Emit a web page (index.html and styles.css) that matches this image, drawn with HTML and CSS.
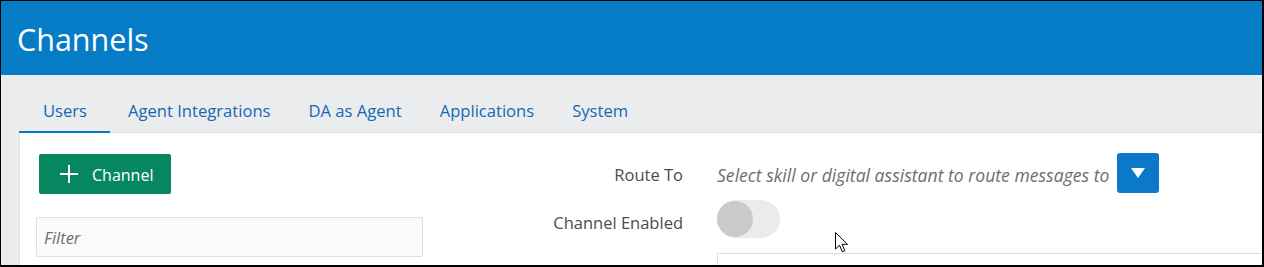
FILE: index.html
```html
<!DOCTYPE html>
<html lang="en">
<head>
<meta charset="utf-8">
<title>Channels</title>
<link rel="stylesheet" href="styles.css">
</head>
<body>
<div class="frame">
  <header class="header">
    <h1 class="title">Channels</h1>
  </header>
  <main class="content">
    <nav class="tabs">
      <a class="tab tab-active">Users</a>
      <a class="tab">Agent Integrations</a>
      <a class="tab">DA as Agent</a>
      <a class="tab">Applications</a>
      <a class="tab">System</a>
    </nav>
    <section class="panel">
      <div class="list-col">
        <button class="add-btn" type="button">
          <svg class="plus" width="20" height="20" viewBox="0 0 20 20" aria-hidden="true">
            <path d="M10 1v18M1 10h18" stroke="#fff" stroke-width="2" fill="none"/>
          </svg>
          <span>Channel</span>
        </button>
        <div class="filter">Filter</div>
      </div>
      <div class="form">
        <div class="label label-route">Route To</div>
        <div class="control control-route">
          <span class="placeholder">Select skill or digital assistant to route messages to</span>
          <button class="drop-btn" type="button" aria-label="Open">
            <svg width="14" height="10" viewBox="0 0 14 10" aria-hidden="true">
              <path d="M0 0h14L7 10z" fill="#fff"/>
            </svg>
          </button>
        </div>
        <div class="label label-enabled">Channel Enabled</div>
        <div class="control control-enabled">
          <span class="toggle"><span class="knob"></span></span>
        </div>
        <div class="label label-third">Allowed Domains</div>
        <div class="control control-third">
          <div class="textbox"></div>
        </div>
      </div>
      <svg class="cursor" width="13" height="21" viewBox="0 0 13 21" aria-hidden="true">
        <path d="M0.5 0.5v16.5l4-3.8 2.8 6.6 2.6-1.1-2.8-6.4h5.4z" fill="#fff" stroke="#000" stroke-width="1"/>
      </svg>
    </section>
  </main>
</div>
</body>
</html>
```

FILE: styles.css
```css
* { box-sizing: border-box; }

html, body {
  margin: 0;
  padding: 0;
  background: #000;
}

body {
  font-family: "Open Sans", "Noto Sans", sans-serif;
  width: 1264px;
  height: 267px;
  overflow: hidden;
}

.frame {
  width: 1264px;
  height: 267px;
  border-style: solid;
  border-color: #000;
  border-width: 1px 2px 2px 1px;
  background: #ebecee;
  overflow: hidden;
  display: flex;
  flex-direction: column;
}

.header {
  height: 74px;
  flex: none;
  background: #067cc7;
  padding-left: 16px;
  display: flex;
  align-items: center;
}

.title {
  margin: 0;
  font-weight: 400;
  font-size: 30.5px;
  line-height: 40px;
  color: #fff;
  padding-top: 1px;
}

.content {
  flex: 1;
  padding-left: 18px;
  display: flex;
  flex-direction: column;
  min-height: 0;
}

.tabs {
  height: 58px;
  flex: none;
  display: flex;
  align-items: stretch;
  border-bottom: 1px solid #dcdde0;
}

.tab {
  display: flex;
  align-items: center;
  padding: 14px 19px 0;
  font-size: 16.6px;
  color: #1468b4;
  position: relative;
  top: 1px;
  margin-bottom: -1px;
  border-bottom: 3px solid transparent;
}

.tab-active {
  padding-left: 24px;
  padding-right: 23px;
  border-bottom-color: #0679c6;
}

.tab-active + .tab { padding-left: 18px; }

.panel {
  flex: 1;
  background: #fff;
  border-left: 1px solid #e2e3e5;
  display: flex;
  position: relative;
  min-height: 0;
}

.list-col {
  width: 421px;
  flex: none;
  padding: 21px 0 0 16px;
  display: flex;
  flex-direction: column;
  align-items: flex-start;
}

.add-btn {
  margin-left: 3px;
  width: 132px;
  height: 40px;
  border: none;
  border-radius: 2px;
  background: #07875f;
  color: #fff;
  font-family: inherit;
  font-size: 16px;
  display: flex;
  align-items: center;
  padding: 0 0 0 20px;
  gap: 13px;
}

.add-btn span {
  position: relative;
  top: 1px;
}

.filter {
  margin-top: 23px;
  width: 387px;
  height: 40px;
  border: 1px solid #e0e0e0;
  border-radius: 2px;
  background: #fafafa;
  color: #6e6e6e;
  font-style: italic;
  font-size: 16.5px;
  display: flex;
  align-items: center;
  padding: 0 0 0 7px;
}

.form {
  flex: 1;
  display: grid;
  grid-template-columns: 242px 1fr;
  column-gap: 34px;
  grid-template-rows: 40px 45px 80px;
  row-gap: 0;
  padding-top: 20px;
  align-items: center;
}

.label {
  text-align: right;
  font-size: 16.5px;
  color: #4c4c4c;
  white-space: nowrap;
}

.label-route { padding-top: 2px; }

.label-enabled {
  align-self: end;
  padding-bottom: 4px;
}

.control-enabled { align-self: end; }

.label-third,
.control-third {
  margin-top: 15px;
  align-self: start;
}

.label-third { padding-top: 9px; }

.control-route {
  display: flex;
  align-items: center;
  gap: 8px;
}

.placeholder {
  font-style: italic;
  font-size: 17.6px;
  color: #6e6e6e;
  position: relative;
  top: 2px;
  white-space: nowrap;
}

.drop-btn {
  width: 42px;
  height: 40px;
  border: none;
  border-radius: 3px;
  background: #0a7ac8;
  display: flex;
  align-items: center;
  justify-content: center;
  padding: 0;
}

.toggle {
  display: block;
  width: 63px;
  height: 38px;
  border-radius: 19px;
  background: #ebebeb;
  padding: 1px 0 0 0;
}

.knob {
  display: block;
  width: 36px;
  height: 36px;
  border-radius: 50%;
  background: #c9cacc;
}

.textbox {
  height: 60px;
  border: 1px solid #dedede;
  border-right: none;
  border-radius: 2px 0 0 0;
  background: #fff;
}

.cursor {
  position: absolute;
  left: 815px;
  top: 99px;
}
```
